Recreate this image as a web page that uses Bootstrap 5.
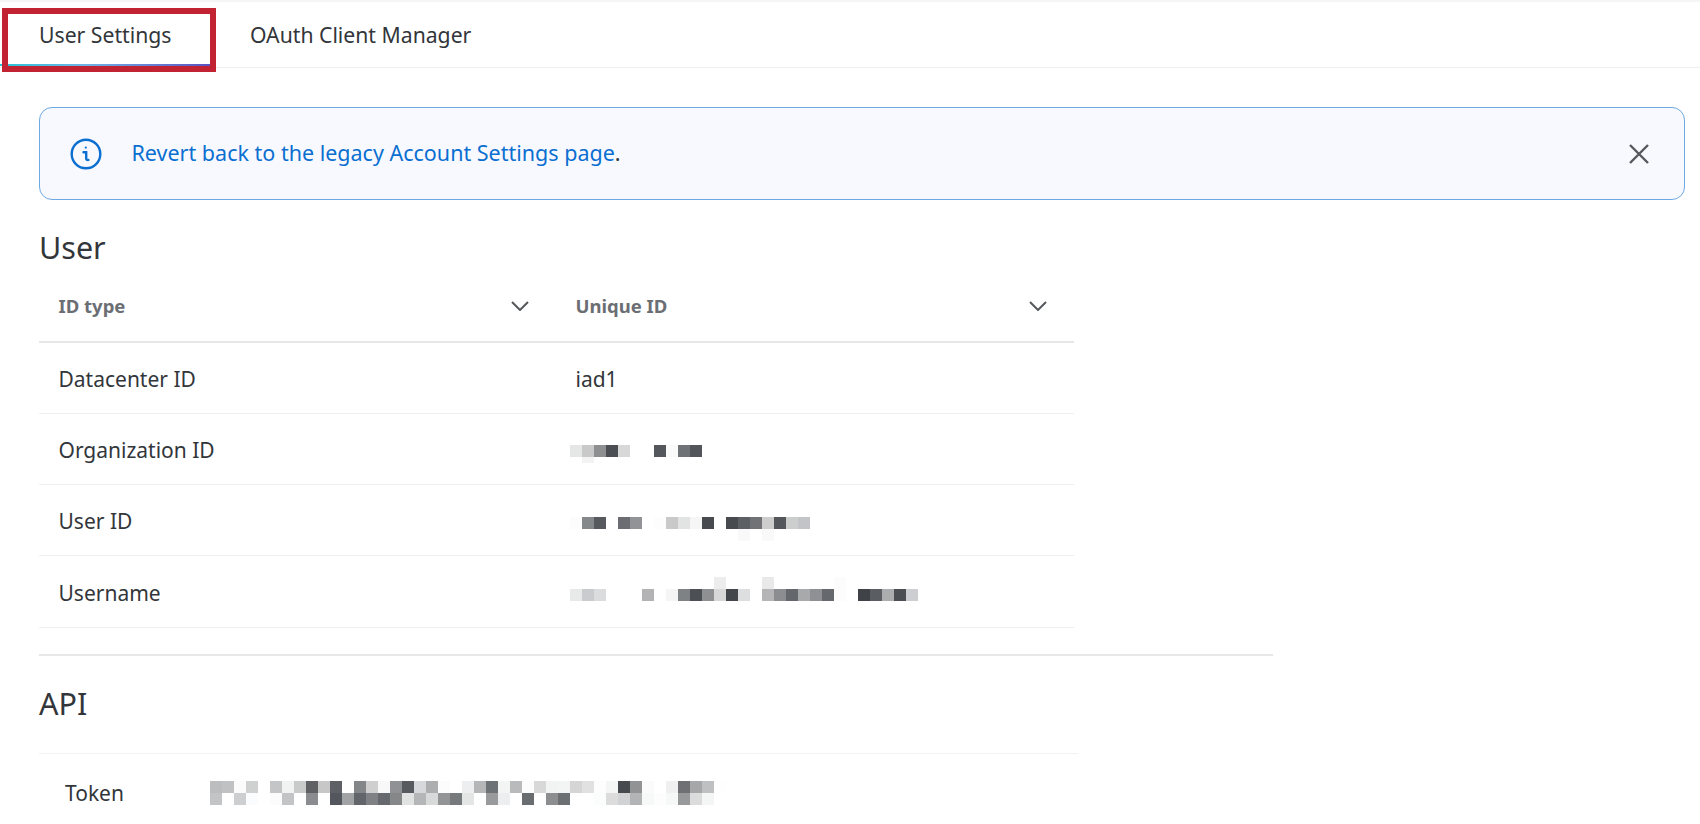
<!DOCTYPE html>
<html lang="en">
<head>
<meta charset="utf-8">
<title>User Settings</title>
<link href="https://cdn.jsdelivr.net/npm/bootstrap@5.3.0/dist/css/bootstrap.min.css" rel="stylesheet">
<style>
html,body{height:100%;overflow:hidden}
body{background:#fff;color:#32363a;font-family:"Noto Sans","Open Sans",sans-serif;font-size:21px;position:relative}
.topstrip{height:2px;background:#f5f5f5}
.tabbar{height:66px;border-bottom:1px solid #efefef;padding-left:0}
.tabbar .nav-link{color:#32363a;padding:4px 0 0;height:64px;display:flex;align-items:center;font-size:21.2px;border-bottom:2px solid transparent}
.tab-one.nav-link{width:212px;padding-left:39px;border-image:linear-gradient(90deg,#27c4d6,#6fb4e6 40%,#5b4fc0) 1}
.tab-two.nav-link{margin-left:38px}
.redbox{position:absolute;left:2px;top:8px;width:214px;height:64px;border:6px solid #c12333;pointer-events:none}
.pagebody{padding:39px 15px 0 39px}
.notice{display:flex;align-items:center;height:93px;margin:0;padding:0 35px 0 29.5px;background:#f8f9fe;border:1.5px solid #6ea9e3;border-radius:13px;color:#32363a;font-size:21.5px}
.notice a{color:#0b6fd1;text-decoration:none}
.notice .txt{margin-left:30px}
.closer{margin-left:auto;background:none;border:0;padding:0;display:flex}
.sect-title{font-size:30.5px;font-weight:400;color:#32363a;margin:0;line-height:40px}
.sect-user{margin-top:27px}
.idtable{width:1035px;table-layout:fixed;margin:0;--bs-table-bg:transparent;color:#32363a}
.idtable th,.idtable td{padding:0 27px 0 19.5px;border-bottom:1px solid #f0f0f0;vertical-align:middle;font-size:21px;color:#32363a}
.idtable td{padding-top:4px}
.idtable .col-a{width:517px}
.idtable thead th{height:75px;padding-top:4px;font-size:18.5px;font-weight:700;color:#6b6e73;border-bottom:2px solid #e6e6e6}
.idtable tbody tr{height:71.3px}
.thwrap{display:flex;justify-content:space-between;align-items:center}
.mosaic{display:block;margin-left:-6px;shape-rendering:crispEdges}
.m-org{margin-top:6px}
.m-usr{margin-top:13px}
.m-nam{margin-top:-9px}
.rule{width:1234px;height:2px;background:#e7e7e7;margin-top:26px}
.sect-api{margin-top:27px}
.tokenwrap{margin-top:30px;width:1039px;border-top:1px solid #f3f3f3;padding:27px 0 0 26px;display:flex;align-items:flex-start}
.tokenwrap .lbl{width:145px;line-height:24px;font-size:21px}
</style>
</head>
<body>
<div class="topstrip"></div>
<ul class="nav tabbar">
  <li class="nav-item"><a class="nav-link tab-one" href="#">User Settings</a></li>
  <li class="nav-item"><a class="nav-link tab-two" href="#">OAuth Client Manager</a></li>
</ul>
<div class="redbox"></div>

<main class="pagebody">
  <div class="alert notice" role="alert">
    <svg width="32" height="32" viewBox="0 0 32 32" fill="none" stroke="#0b6fd1" stroke-width="2.4" stroke-linecap="round" aria-hidden="true"><circle cx="16" cy="16" r="14.3"/><path d="M13.5 14.2h2.7v6.2c0 1.2.8 1.8 2.2 1.5"/><circle cx="15.8" cy="9.6" r="1.1" fill="#0b6fd1" stroke="none"/></svg>
    <span class="txt"><a href="#">Revert back to the legacy Account Settings page</a>.</span>
    <button class="closer" type="button" aria-label="Close"><svg width="20" height="20" viewBox="0 0 20 20" stroke="#55585c" stroke-width="2.4" aria-hidden="true"><path d="M1 1l18 18M19 1L1 19"/></svg></button>
  </div>

  <h2 class="sect-title sect-user">User</h2>
  <table class="table idtable">
    <thead>
      <tr>
        <th class="col-a"><div class="thwrap">ID type<svg width="18" height="10" viewBox="0 0 18 10" fill="none" stroke="#55585c" stroke-width="2"><path d="M1 1l8 8 8-8"/></svg></div></th>
        <th><div class="thwrap">Unique ID<svg width="18" height="10" viewBox="0 0 18 10" fill="none" stroke="#55585c" stroke-width="2"><path d="M1 1l8 8 8-8"/></svg></div></th>
      </tr>
    </thead>
    <tbody>
      <tr><td>Datacenter ID</td><td>iad1</td></tr>
      <tr><td>Organization ID</td><td>
        <svg class="mosaic m-org" width="132" height="18" viewBox="0 0 132 18">
          <rect x="0" y="0" width="12" height="12" fill="#e5e7e6"/><rect x="12" y="0" width="12" height="12" fill="#c9c9c9"/><rect x="24" y="0" width="12" height="12" fill="#8e8f91"/><rect x="36" y="0" width="12" height="12" fill="#4b4e52"/><rect x="48" y="0" width="12" height="12" fill="#d8d8d8"/><rect x="84" y="0" width="12" height="12" fill="#54585c"/><rect x="96" y="0" width="12" height="12" fill="#fafafa"/><rect x="108" y="0" width="12" height="12" fill="#6f7276"/><rect x="120" y="0" width="12" height="12" fill="#52565b"/><rect x="12" y="12" width="12" height="6" fill="#f2f3f2"/>
        </svg></td></tr>
      <tr><td>User ID</td><td>
        <svg class="mosaic m-usr" width="240" height="24" viewBox="0 0 240 24">
          <rect x="0" y="0" width="12" height="12" fill="#fcfcfc"/><rect x="12" y="0" width="12" height="12" fill="#84888b"/><rect x="24" y="0" width="12" height="12" fill="#565a5e"/><rect x="48" y="0" width="12" height="12" fill="#6c6d72"/><rect x="60" y="0" width="12" height="12" fill="#929397"/><rect x="84" y="0" width="12" height="12" fill="#fdfdfd"/><rect x="96" y="0" width="12" height="12" fill="#c9c9c9"/><rect x="108" y="0" width="12" height="12" fill="#e2e4e3"/><rect x="120" y="0" width="12" height="12" fill="#f6f6f6"/><rect x="132" y="0" width="12" height="12" fill="#474a4e"/><rect x="156" y="0" width="12" height="12" fill="#474a4e"/><rect x="168" y="0" width="12" height="12" fill="#5c6065"/><rect x="180" y="0" width="12" height="12" fill="#707276"/><rect x="192" y="0" width="12" height="12" fill="#cccdcc"/><rect x="204" y="0" width="12" height="12" fill="#53565b"/><rect x="216" y="0" width="12" height="12" fill="#cccdcd"/><rect x="228" y="0" width="12" height="12" fill="#c3c4c7"/><rect x="168" y="12" width="12" height="12" fill="#f9f9f9"/><rect x="192" y="12" width="12" height="12" fill="#f9f9f9"/>
        </svg></td></tr>
      <tr><td>Username</td><td>
        <svg class="mosaic m-nam" width="348" height="24" viewBox="0 0 348 24">
          <rect x="144" y="0" width="12" height="12" fill="#ededed"/><rect x="192" y="0" width="12" height="12" fill="#e9e9e9"/><rect x="264" y="0" width="12" height="12" fill="#fcfcfc"/>
          <rect x="0" y="12" width="12" height="12" fill="#e8e9e9"/><rect x="12" y="12" width="12" height="12" fill="#cacbce"/><rect x="24" y="12" width="12" height="12" fill="#dbdcde"/><rect x="72" y="12" width="12" height="12" fill="#b3b3b5"/><rect x="96" y="12" width="12" height="12" fill="#f5f5f5"/><rect x="108" y="12" width="12" height="12" fill="#7e8285"/><rect x="120" y="12" width="12" height="12" fill="#4c5054"/><rect x="132" y="12" width="12" height="12" fill="#8f9092"/><rect x="144" y="12" width="12" height="12" fill="#d8d8d8"/><rect x="156" y="12" width="12" height="12" fill="#43474b"/><rect x="168" y="12" width="12" height="12" fill="#dddee0"/><rect x="192" y="12" width="12" height="12" fill="#b5b5b7"/><rect x="204" y="12" width="12" height="12" fill="#8c8d91"/><rect x="216" y="12" width="12" height="12" fill="#64686c"/><rect x="228" y="12" width="12" height="12" fill="#a8a9ab"/><rect x="240" y="12" width="12" height="12" fill="#8f9094"/><rect x="252" y="12" width="12" height="12" fill="#65696d"/><rect x="264" y="12" width="12" height="12" fill="#fbfcfb"/><rect x="288" y="12" width="12" height="12" fill="#3f4347"/><rect x="300" y="12" width="12" height="12" fill="#5a5e62"/><rect x="312" y="12" width="12" height="12" fill="#acadaf"/><rect x="324" y="12" width="12" height="12" fill="#4b4f53"/><rect x="336" y="12" width="12" height="12" fill="#cdced1"/>
        </svg></td></tr>
    </tbody>
  </table>
  <div class="rule"></div>

  <h2 class="sect-title sect-api">API</h2>
  <div class="tokenwrap">
    <span class="lbl">Token</span>
    <svg width="516" height="24" viewBox="0 0 516 24" shape-rendering="crispEdges">
      <g>
      <rect x="0" y="0" width="12" height="12" fill="#bcbdbf"/><rect x="12" y="0" width="12" height="12" fill="#c0c1c3"/><rect x="24" y="0" width="12" height="12" fill="#fafbfa"/><rect x="36" y="0" width="12" height="12" fill="#cfd0d0"/><rect x="60" y="0" width="12" height="12" fill="#c4c5c7"/><rect x="72" y="0" width="12" height="12" fill="#f1f3f2"/><rect x="84" y="0" width="12" height="12" fill="#c9cbca"/><rect x="96" y="0" width="12" height="12" fill="#5f6165"/><rect x="108" y="0" width="12" height="12" fill="#c7c7c7"/><rect x="120" y="0" width="12" height="12" fill="#5d6165"/><rect x="144" y="0" width="12" height="12" fill="#83878a"/><rect x="156" y="0" width="12" height="12" fill="#cfcfcf"/><rect x="168" y="0" width="12" height="12" fill="#f8f8f8"/><rect x="180" y="0" width="12" height="12" fill="#909195"/><rect x="192" y="0" width="12" height="12" fill="#575a5f"/><rect x="204" y="0" width="12" height="12" fill="#d7d8db"/><rect x="216" y="0" width="12" height="12" fill="#adaeb0"/><rect x="228" y="0" width="12" height="12" fill="#fcfcfc"/><rect x="252" y="0" width="12" height="12" fill="#eceeef"/><rect x="264" y="0" width="12" height="12" fill="#b5b6b8"/><rect x="276" y="0" width="12" height="12" fill="#6d7276"/><rect x="288" y="0" width="12" height="12" fill="#f3f4f4"/><rect x="300" y="0" width="12" height="12" fill="#b9babb"/><rect x="312" y="0" width="12" height="12" fill="#fbfcfb"/><rect x="324" y="0" width="12" height="12" fill="#d8d8d8"/><rect x="336" y="0" width="12" height="12" fill="#f2f4f3"/><rect x="348" y="0" width="12" height="12" fill="#f3f5f4"/><rect x="360" y="0" width="12" height="12" fill="#d5d5d5"/><rect x="372" y="0" width="12" height="12" fill="#e1e1e1"/><rect x="384" y="0" width="12" height="12" fill="#fdfdfd"/><rect x="396" y="0" width="12" height="12" fill="#f4f5f5"/><rect x="408" y="0" width="12" height="12" fill="#464a4e"/><rect x="420" y="0" width="12" height="12" fill="#929395"/><rect x="432" y="0" width="12" height="12" fill="#fafbfa"/><rect x="456" y="0" width="12" height="12" fill="#f0f0f0"/><rect x="468" y="0" width="12" height="12" fill="#6f7074"/><rect x="480" y="0" width="12" height="12" fill="#a6a7a9"/><rect x="492" y="0" width="12" height="12" fill="#bfc0c2"/><rect x="504" y="0" width="12" height="12" fill="#fefefe"/>
      </g>
      <g>
      <rect x="0" y="12" width="12" height="12" fill="#c3c4c6"/><rect x="24" y="12" width="12" height="12" fill="#ccced0"/><rect x="36" y="12" width="12" height="12" fill="#fafcfd"/><rect x="60" y="12" width="12" height="12" fill="#fcfcfc"/><rect x="72" y="12" width="12" height="12" fill="#c3c4c6"/><rect x="96" y="12" width="12" height="12" fill="#8b8c90"/><rect x="120" y="12" width="12" height="12" fill="#53565c"/><rect x="132" y="12" width="12" height="12" fill="#a2a3a5"/><rect x="144" y="12" width="12" height="12" fill="#62666a"/><rect x="156" y="12" width="12" height="12" fill="#7f8185"/><rect x="168" y="12" width="12" height="12" fill="#666a6e"/><rect x="180" y="12" width="12" height="12" fill="#868789"/><rect x="192" y="12" width="12" height="12" fill="#e0e3e1"/><rect x="204" y="12" width="12" height="12" fill="#b5b6b8"/><rect x="216" y="12" width="12" height="12" fill="#d8d9d9"/><rect x="228" y="12" width="12" height="12" fill="#939496"/><rect x="240" y="12" width="12" height="12" fill="#767a7c"/><rect x="252" y="12" width="12" height="12" fill="#e4e5e5"/><rect x="276" y="12" width="12" height="12" fill="#999a9c"/><rect x="288" y="12" width="12" height="12" fill="#eceef0"/><rect x="312" y="12" width="12" height="12" fill="#696d70"/><rect x="336" y="12" width="12" height="12" fill="#8c8e8f"/><rect x="348" y="12" width="12" height="12" fill="#6c7073"/><rect x="384" y="12" width="12" height="12" fill="#fbfdfc"/><rect x="396" y="12" width="12" height="12" fill="#dcdcdc"/><rect x="408" y="12" width="12" height="12" fill="#d1d2d4"/><rect x="420" y="12" width="12" height="12" fill="#b3b4b6"/><rect x="432" y="12" width="12" height="12" fill="#f7f8f8"/><rect x="444" y="12" width="12" height="12" fill="#fdfdfe"/><rect x="456" y="12" width="12" height="12" fill="#f6f7f7"/><rect x="468" y="12" width="12" height="12" fill="#98999b"/><rect x="480" y="12" width="12" height="12" fill="#dcdcdc"/><rect x="492" y="12" width="12" height="12" fill="#f4f6f5"/>
      </g>
    </svg>
  </div>
</main>
<script src="https://cdn.jsdelivr.net/npm/bootstrap@5.3.0/dist/js/bootstrap.bundle.min.js"></script>
</body>
</html>
